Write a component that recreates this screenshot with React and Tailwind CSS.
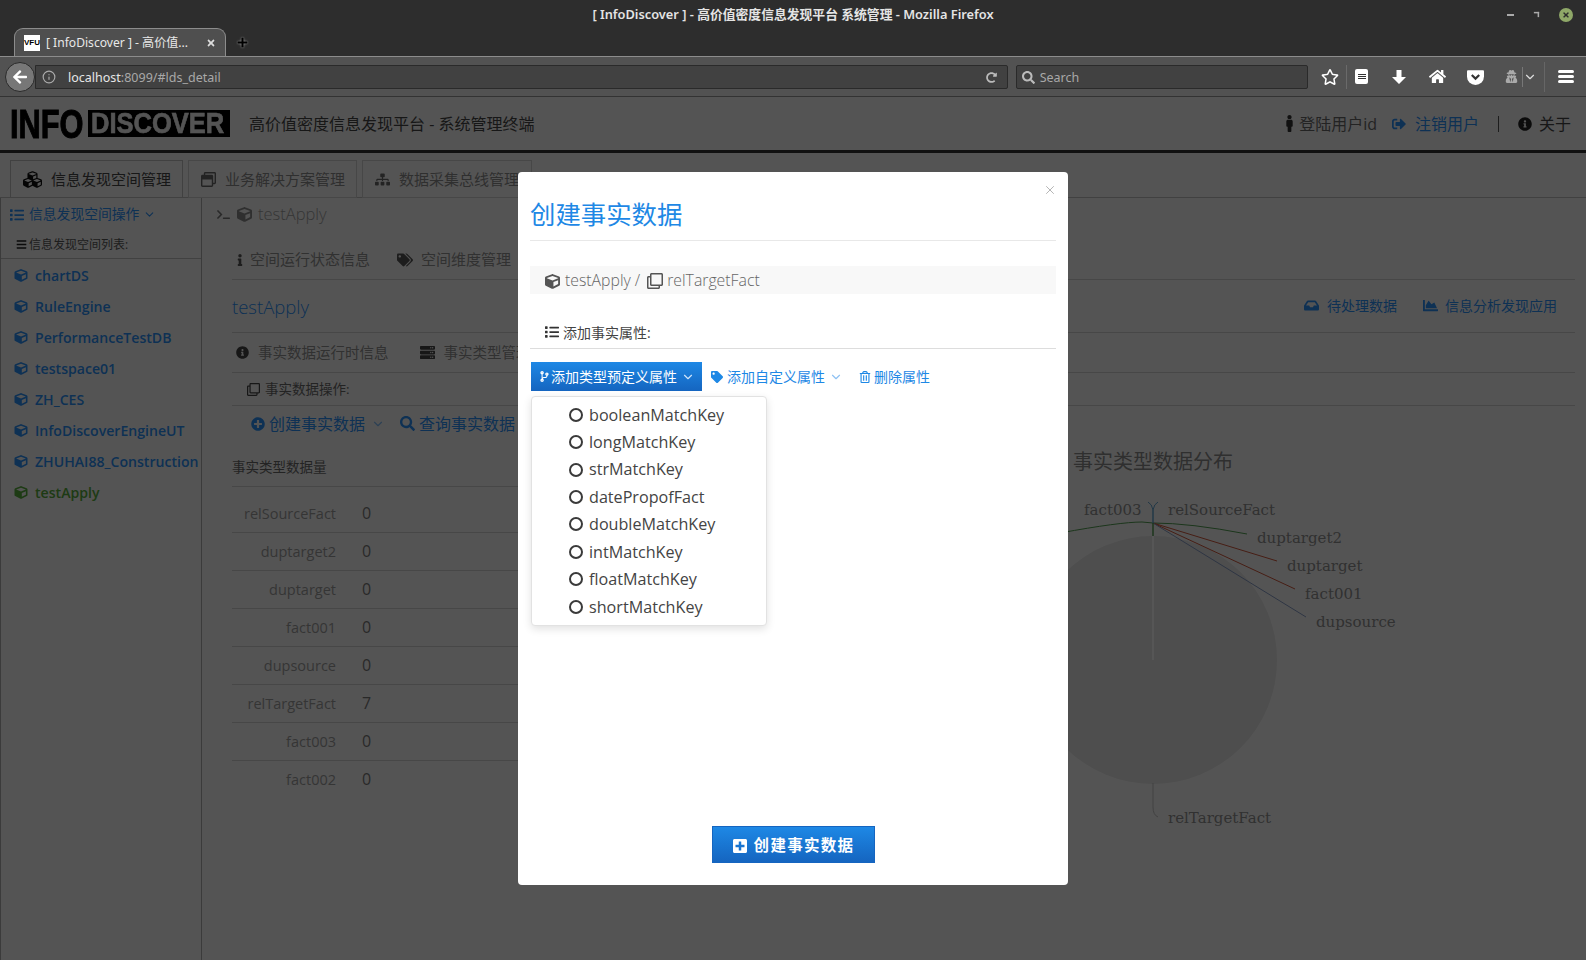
import React from "react";
import {
  FaCubes, FaCube, FaList, FaBars, FaInfo, FaTags, FaTag, FaInfoCircle, FaServer, FaRegClone, FaPlusCircle, FaSearch,
  FaTerminal, FaSitemap, FaCodeBranch, FaRegTrashAlt, FaMale, FaSignOutAlt, FaInbox, FaChartArea, FaPlusSquare,
  FaRegStar, FaHome, FaArrowLeft, FaRedoAlt, FaUserSecret, FaTimes, FaPlus, FaRegWindowRestore,
} from "react-icons/fa";
import { ChevronDown, Info, X } from "lucide-react";

const spaces = ["chartDS", "RuleEngine", "PerformanceTestDB", "testspace01", "ZH_CES", "InfoDiscoverEngineUT", "ZHUHAI88_Construction"];
const counts = [["relSourceFact", 0], ["duptarget2", 0], ["duptarget", 0], ["fact001", 0], ["dupsource", 0], ["relTargetFact", 7], ["fact003", 0], ["fact002", 0]];
const keys = ["booleanMatchKey", "longMatchKey", "strMatchKey", "datePropofFact", "doubleMatchKey", "intMatchKey", "floatMatchKey", "shortMatchKey"];

function Browser() {
  return (
    <div className="font-['Noto_Sans','Noto_Sans_CJK_SC',sans-serif] text-white">
      <div className="h-[57px] bg-[#2d2d2d] border-b border-[#8c8c8c] flex flex-col">
        <div className="h-[28px] pt-[1px] grid grid-cols-[1fr_auto_1fr] items-center">
          <div />
          <div className="text-[12.8px] font-semibold text-[#e4e4e4]">[ InfoDiscover ] - 高价值密度信息发现平台 系统管理 - Mozilla Firefox</div>
          <div className="flex justify-end items-center pr-[13px] gap-[19px] text-[#bbb]">
            <div className="w-[7px] h-[2px] bg-[#aaa]" />
            <div className="w-[7px] h-[7px] border-t-2 border-r-2 border-[#aaa] scale-75" />
            <div className="w-[14px] h-[14px] rounded-full bg-[#8fa868] flex items-center justify-center">
              <FaTimes className="text-[8px] text-[#2d2d2d]" />
            </div>
          </div>
        </div>
        <div className="flex items-end h-[28px] pl-[14px]">
          <div className="w-[212px] h-[28px] pt-[1px] bg-[#4f4f4f] border border-b-0 border-[#8c8c8c] rounded-t-[9px] flex items-center pl-[9px] pr-[9px]">
            <div className="w-[16px] h-[16px] bg-white text-black text-[8px] font-bold leading-[16px] text-center shrink-0 font-['Liberation_Sans',sans-serif]">VFU</div>
            <div className="ml-[6px] text-[12.1px] text-[#e8e8e8] whitespace-nowrap flex-1">[ InfoDiscover ] - 高价值...</div>
            <FaTimes className="text-[10px] text-[#ddd]" />
          </div>
          <div className="h-[28px] ml-[11px] flex items-center"><FaPlus className="text-[11px] text-black [filter:drop-shadow(0_0_1px_#aaa)]" /></div>
        </div>
      </div>
      <div className="h-[40px] bg-[#525252] border-b border-[#333] flex items-center pl-[5px] pr-[12px]">
        <div className="w-[30px] h-[30px] rounded-full bg-[#777] border border-[#2a2a2a] flex items-center justify-center shrink-0">
          <FaArrowLeft className="text-[16px] text-white" />
        </div>
        <div className="w-[975px] h-[24px] pt-[3px] bg-[#414141] border border-[#2a2a2a] flex items-center text-[12.5px] pl-[6px] pr-[10px] rounded-r-[2px]">
          <Info size={14} className="text-[#aaa] mr-[12px] -translate-y-px" />
          <span className="text-[#e6e6e6]">localhost</span>
          <span className="text-[#a8a8a8]">:8099/#lds_detail</span>
          <FaRedoAlt className="ml-auto text-[11px] text-[#bbb] -translate-y-px" />
        </div>
        <div className="w-[293px] h-[24px] pt-[3px] ml-[8px] bg-[#414141] border border-[#2a2a2a] flex items-center text-[12.5px] pl-[5px] rounded-[2px]">
          <FaSearch className="text-[13px] text-[#bbb] -translate-y-px" />
          <span className="ml-[5px] text-[#a8a8a8]">Search</span>
        </div>
        <div className="flex items-center ml-[13px] text-white">
          <FaRegStar className="text-[18px]" />
          <div className="w-[1px] h-[24px] bg-[#6a6a6a] ml-[7px]" />
          <div className="w-[13px] h-[15px] bg-white rounded-[2px] ml-[8px] flex flex-col justify-center items-center gap-[1px]">
            <div className="w-[8px] h-[1px] bg-[#333]" /><div className="w-[8px] h-[1px] bg-[#333]" /><div className="w-[8px] h-[1px] bg-[#333]" />
          </div>
          <svg viewBox="0 0 16 16" className="w-[16px] h-[16px] ml-[23px]"><path d="M5.5 1h5v7H15l-7 7-7-7h4.500z" fill="#fff" /></svg>
          <FaHome className="text-[17px] ml-[22px]" />
          <svg viewBox="0 0 16 16" className="w-[17px] h-[17px] ml-[21px]"><path d="M1 2h14a1 1 0 0 1 1 1v5a8 8 0 0 1-16 0V3a1 1 0 0 1 1-1z" fill="#fff" /><path d="M4.5 6.5 8 10l3.5-3.500" stroke="#333" strokeWidth="2" fill="none" /></svg>
          <FaUserSecret className="text-[13px] text-[#aaa] ml-[21px]" />
          <div className="w-[1px] h-[20px] bg-[#777] ml-[4px]" />
          <ChevronDown size={14} className="ml-[0px] text-[#ddd]" />
          <div className="w-[1px] h-[30px] bg-[#666] ml-[7px]" />
          <div className="ml-[13px] flex flex-col gap-[2px]">
            <div className="w-[16px] h-[3px] bg-white rounded-sm" /><div className="w-[16px] h-[3px] bg-white rounded-sm" /><div className="w-[16px] h-[3px] bg-white rounded-sm" />
          </div>
        </div>
      </div>
    </div>
  );
}

function Header() {
  return (
    <div className="h-[56px] shrink-0 bg-[#f1f1f1] border-b-[3px] border-[#333] flex items-center pl-[10px] pr-[15px] text-[#777]">
      <div className="flex items-center h-[29px] font-['Liberation_Sans',sans-serif] font-bold leading-none">
        <div className="w-[78px] overflow-visible">
          <span className="inline-block text-[40px] text-black scale-x-[0.77] origin-left [-webkit-text-stroke:1px_#000]">INFO</span>
        </div>
        <div className="bg-black h-[27px] w-[142px] flex items-center pl-[3px]">
          <span className="inline-block text-[#f1f1f1] text-[29px] scale-x-[0.88] origin-left [-webkit-text-stroke:0.6px_#f1f1f1]">DISCOVER</span>
        </div>
      </div>
      <div className="ml-[19px] text-[16px] text-[#444]">高价值密度信息发现平台 - 系统管理终端</div>
      <div className="ml-auto flex items-center text-[16px]">
        <FaMale className="text-[17px] text-[#333]" />
        <span className="ml-[1px] text-[#666]">登陆用户id</span>
        <FaSignOutAlt className="ml-[15px] text-[14px] text-[#2a8cf0]" />
        <span className="ml-[9px] text-[#2a8cf0]">注销用户</span>
        <div className="w-[1px] h-[16px] bg-[#555] ml-[19px]" />
        <FaInfoCircle className="ml-[19px] text-[14px] text-[#222]" />
        <span className="ml-[7px] text-[#444]">关于</span>
      </div>
    </div>
  );
}

function Tabs() {
  return (
    <div className="h-[45px] shrink-0 pt-[7px] pl-[10px] flex gap-[5px] border-b border-[#bbb] text-[15px]">
      <div className="w-[173px] h-[38px] border border-b-0 border-[#bbb] flex items-center pl-[12px] text-[#444]">
        <FaCubes className="text-[19px] text-[#111]" /><span className="ml-[9px]">信息发现空间管理</span>
      </div>
      <div className="w-[169px] h-[38px] border border-[#ccc] flex items-center pl-[12px] text-[#888]">
        <FaRegWindowRestore className="text-[15px] text-[#666]" /><span className="ml-[9px]">业务解决方案管理</span>
      </div>
      <div className="w-[170px] h-[38px] border border-[#ccc] flex items-center pl-[12px] text-[#888]">
        <FaSitemap className="text-[15px] text-[#666]" /><span className="ml-[9px]">数据采集总线管理</span>
      </div>
    </div>
  );
}

function Sidebar() {
  return (
    <div className="w-[202px] shrink-0 border-r border-l border-[#aaa]">
      <div className="h-[33px] flex items-center pl-[9px] text-[13.8px] text-[#2a8cf0]">
        <FaList className="text-[14px]" /><span className="ml-[5px]">信息发现空间操作</span><ChevronDown size={13} className="ml-[4px]" />
      </div>
      <div className="h-[28px] border-b border-[#bbb] flex items-center pl-[15px] text-[12px] text-[#555]">
        <FaBars className="text-[11px] text-[#222]" /><span className="ml-[2px]">信息发现空间列表:</span>
      </div>
      <div className="pt-[1px]">
        {spaces.map((s) => (
          <div key={s} className="h-[31px] flex items-center pl-[13px] text-[14.1px] font-semibold text-[#2a8cf0] whitespace-nowrap">
            <FaCube className="text-[13px] w-[14px] shrink-0" /><span className="ml-[7px]">{s}</span>
          </div>
        ))}
        <div className="h-[31px] flex items-center pl-[13px] text-[14.1px] font-semibold text-[#55a83a]">
          <FaCube className="text-[13px] w-[14px] shrink-0" /><span className="ml-[7px]">testApply</span>
        </div>
      </div>
    </div>
  );
}

function Chart() {
  return (
    <svg viewBox="0 0 580 360" className="w-[580px] h-[360px] block font-['DejaVu_Serif',serif]" fill="#8c8c8c" fontSize="15">
      <circle cx="153" cy="183" r="124" fill="#dedede" />
      <g fill="none" strokeWidth="1">
        <path d="M60 56 Q120 45 142 45 L153 46" stroke="#4f9a4f" />
        <path d="M153 46 Q190 46 247 57" stroke="#4f9a4f" />
        <path d="M153 46 L277 84" stroke="#c9553a" />
        <path d="M153 46 L295 112" stroke="#c9553a" />
        <path d="M153 46 L306 140" stroke="#8498c0" />
        <path d="M153 46 V33" stroke="#5f9fca" strokeWidth="1.5" />
        <path d="M153 33 Q152 27 148 25 M153 33 Q154 27 158 25" stroke="#5f9fca" />
        <path d="M153 46 V59" stroke="#4f9a4f" strokeWidth="1.5" />
        <path d="M153 59 V183" stroke="#ffffff" strokeWidth="1.5" />
        <path d="M153 306 V330 Q153 338 158 340" stroke="#bbb" />
      </g>
      <text x="84" y="38">fact003</text>
      <text x="168" y="38">relSourceFact</text>
      <text x="257" y="66">duptarget2</text>
      <text x="287" y="94">duptarget</text>
      <text x="305" y="122">fact001</text>
      <text x="316" y="150">dupsource</text>
      <text x="168" y="346">relTargetFact</text>
    </svg>
  );
}

function Main() {
  return (
    <div className="flex-1 min-w-0 text-[#8c8c8c]">
      <div className="h-[33px] pl-[15px] flex items-center text-[16.5px] font-light text-[#999]">
        <FaTerminal className="text-[13px] text-[#777]" />
        <FaCube className="ml-[7px] text-[15px] text-[#888]" />
        <span className="ml-[6px]">testApply</span>
      </div>
      <div className="ml-[30px] mr-[11px]">
        <div className="h-[49px] pt-[9px] flex items-center border-b border-[#ccc] text-[15px]">
          <FaInfo className="ml-[2px] text-[12px] text-[#555]" /><span className="ml-[4px]">空间运行状态信息</span>
          <FaTags className="ml-[27px] text-[16px] text-[#555]" /><span className="ml-[8px]">空间维度管理</span>
        </div>
        <div className="h-[53px] flex items-center border-b border-[#ccc]">
          <span className="text-[18.5px] font-light text-[#2a8cf0] mt-[2px]">testApply</span>
          <div className="ml-auto mr-[18px] pb-[2px] flex items-center text-[14px] text-[#2a8cf0]">
            <FaInbox className="text-[15px]" /><span className="ml-[8px]">待处理数据</span>
            <FaChartArea className="ml-[26px] text-[15px]" /><span className="ml-[7px]">信息分析发现应用</span>
          </div>
        </div>
        <div className="h-[40px] flex items-center border-b border-[#ccc] text-[14.5px]">
          <FaInfoCircle className="ml-[4px] text-[13px] text-[#444]" /><span className="ml-[9px]">事实数据运行时信息</span>
          <FaServer className="ml-[31px] text-[15px] text-[#444]" /><span className="ml-[9px]">事实类型管理</span>
        </div>
        <div className="h-[33px] flex items-center border-b border-[#ccc] pl-[15px] text-[13.5px] text-[#666]">
          <FaRegClone className="text-[13px] text-[#444]" /><span className="ml-[5px]">事实数据操作:</span>
        </div>
        <div className="h-[37px] pb-[2px] flex items-center pl-[19px] text-[16px] text-[#2a8cf0]">
          <FaPlusCircle className="text-[14px]" /><span className="ml-[4px]">创建事实数据</span>
          <ChevronDown size={14} className="ml-[6px] text-[#7fb7ef]" />
          <FaSearch className="ml-[15px] text-[15px]" /><span className="ml-[4px]">查询事实数据</span>
        </div>
        <div className="flex">
          <div className="w-[768px] shrink-0">
            <div className="h-[44px] pt-[5px] flex items-center border-b border-[#ccc] text-[13.5px] text-[#666]">事实类型数据量</div>
            <div className="pt-[8px]">
              {counts.map(([k, v], i) => (
                <div key={k} className={i < 7 ? "h-[38px] flex items-center border-b border-[#ccc]" : "h-[38px] flex items-center"}>
                  <span className="w-[104px] text-right text-[14.5px] text-[#999]">{k}</span>
                  <span className="ml-[26px] text-[16px] text-[#777] -translate-y-px">{v}</span>
                </div>
              ))}
            </div>
          </div>
          <div className="flex-1 min-w-0">
            <div className="h-[34px] pt-[3px] pl-[73px] flex items-center text-[20px] text-[#888]">事实类型数据分布</div>
            <Chart />
          </div>
        </div>
      </div>
    </div>
  );
}

function Modal() {
  return (
    <div className="absolute left-[518px] top-[75px] w-[550px] h-[713px] bg-white rounded-[4px] px-[12px] flex flex-col text-[#444]">
      <X size={14} strokeWidth={1.5} className="absolute right-[11px] top-[11px] text-[#aaa]" />
      <div className="h-[69px] shrink-0 pt-[17px] flex items-center border-b border-[#e8e8e8] text-[25.4px] text-[#1e88e5]">创建事实数据</div>
      <div className="mt-[25px] h-[28px] pt-[2px] bg-[#f8f8f8] pl-[15px] flex items-center text-[15.8px] font-light text-[#666]">
        <FaCube className="text-[15px] text-[#555]" /><span className="ml-[5px]">testApply /</span>
        <FaRegClone className="ml-[7px] text-[16px] text-[#555]" /><span className="ml-[4px]">relTargetFact</span>
      </div>
      <div className="mt-[24px] h-[31px] pb-[2px] pl-[15px] flex items-center border-b border-[#ddd] text-[14px]">
        <FaList className="text-[14px] text-[#333]" /><span className="ml-[4px]">添加事实属性:</span>
      </div>
      <div className="mt-[13px] h-[29px] flex items-center text-[14px] text-[#1e88e5] relative">
        <div className="ml-[1px] w-[171px] h-[29px] bg-gradient-to-b from-[#1e88e5] to-[#1565c0] text-white flex items-center pl-[8px]">
          <FaCodeBranch className="text-[11px]" /><span className="ml-[1px] whitespace-nowrap">添加类型预定义属性</span>
          <ChevronDown size={14} className="ml-[4px] text-[#cfe4fa]" />
        </div>
        <FaTag className="ml-[9px] text-[12px]" /><span className="ml-[4px]">添加自定义属性</span>
        <ChevronDown size={14} className="ml-[4px] text-[#8fc2f3]" />
        <FaRegTrashAlt className="ml-[16px] text-[12px]" /><span className="ml-[3px]">删除属性</span>
        <div className="absolute left-[1px] top-[34px] w-[236px] h-[230px] bg-white border border-[#e2e2e2] rounded-[4px] shadow-[0_3px_8px_rgba(0,0,0,0.12)] pt-[4px] z-10">
          {keys.map((k) => (
            <div key={k} className="h-[27.45px] flex items-center pl-[37px] text-[16.15px] text-[#444]">
              <div className="w-[14px] h-[14px] rounded-full border-[2.5px] border-[#3a3a3a]" /><span className="ml-[6px]">{k}</span>
            </div>
          ))}
        </div>
      </div>
      <button className="mt-auto mb-[22px] self-center w-[163px] h-[37px] pt-[2px] border border-[#1565c0] bg-gradient-to-b from-[#1e88e5] to-[#1565c0] text-white flex items-center justify-center text-[15.5px] font-semibold tracking-[1.3px]">
        <FaPlusSquare className="text-[16px]" /><span className="ml-[6px]">创建事实数据</span>
      </button>
    </div>
  );
}

export default function App() {
  return (
    <div className="w-[1586px] h-[960px] overflow-hidden font-['Open_Sans','Noto_Sans_CJK_SC',sans-serif] bg-[#f1f1f1]">
      <Browser />
      <div className="relative h-[863px] overflow-hidden flex flex-col">
        <Header />
        <Tabs />
        <div className="flex flex-1 min-h-0">
          <Sidebar />
          <Main />
        </div>
        <div className="absolute inset-0 bg-black/65" />
        <Modal />
      </div>
    </div>
  );
}
